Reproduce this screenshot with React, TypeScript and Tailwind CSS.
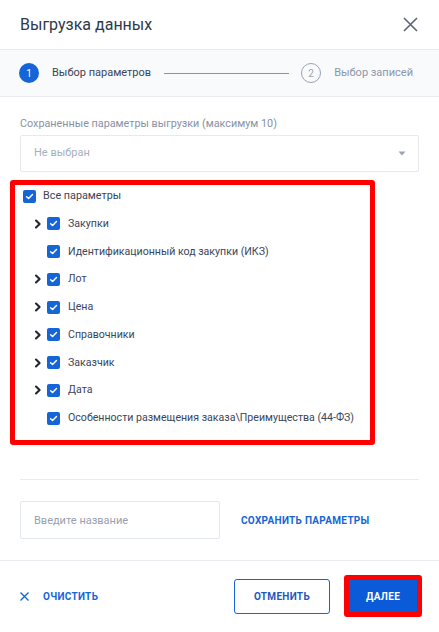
import { useState } from 'react';

type Item = { label: string; expandable: boolean };

const ITEMS: Item[] = [
  { label: 'Закупки', expandable: true },
  { label: 'Идентификационный код закупки (ИКЗ)', expandable: false },
  { label: 'Лот', expandable: true },
  { label: 'Цена', expandable: true },
  { label: 'Справочники', expandable: true },
  { label: 'Заказчик', expandable: true },
  { label: 'Дата', expandable: true },
  { label: 'Особенности размещения заказа\\Преимущества (44-ФЗ)', expandable: false },
];

function Check({ checked }: { checked: boolean }) {
  return (
    <span className={`w-[13px] h-[13px] rounded-[2px] flex items-center justify-center shrink-0 ${checked ? 'bg-[#1565d8]' : 'border border-gray-400 bg-white'}`}>
      {checked && (
        <svg width="9" height="9" viewBox="0 0 10 10" fill="none">
          <path d="M1.8 5.2 L4 7.3 L8.3 2.7" stroke="white" strokeWidth="1.6" strokeLinecap="round" strokeLinejoin="round" />
        </svg>
      )}
    </span>
  );
}

function Chevron() {
  return (
    <svg width="12" height="12" viewBox="0 0 12 12" fill="none">
      <path d="M4 2.5 L7.6 6 L4 9.5" stroke="#1f2733" strokeWidth="2.1" strokeLinecap="round" strokeLinejoin="round" />
    </svg>
  );
}

export default function App() {
  const [name, setName] = useState('');

  return (
    <div className="w-[439px] h-[632px] bg-white flex flex-col text-[#4a5568] whitespace-nowrap" style={{ fontFamily: 'Roboto, "Noto Sans", sans-serif' }}>
      {/* header */}
      <div className="h-[50px] border-b border-[#e6e9ef] flex items-center justify-between px-5">
        <h1 className="text-[16px] text-[#2f3a4b]">Выгрузка данных</h1>
        <button className="w-[16px] h-[16px] flex items-center justify-center mr-[1px]">
          <svg width="15" height="15" viewBox="0 0 15 15">
            <path d="M1 1 L14 14 M14 1 L1 14" stroke="#5b6475" strokeWidth="1.6" />
          </svg>
        </button>
      </div>

      {/* stepper */}
      <div className="h-[47px] bg-[#f9fafc] border-b border-[#e9ecf1] flex items-center pl-[19px] pr-5">
        <span className="w-[20px] h-[20px] rounded-full bg-[#1565d8] text-white text-[10px] flex items-center justify-center">1</span>
        <span className="ml-[13px] text-[11px] text-[#3b4558]">Выбор параметров</span>
        <span className="ml-[13px] w-[125px] h-px bg-[#8a93a6]" />
        <span className="ml-[12px] w-[20px] h-[20px] rounded-full border border-[#9aa3b3] text-[#9aa3b3] text-[10px] flex items-center justify-center">2</span>
        <span className="ml-[13px] text-[11px] text-[#8d96a8]">Выбор записей</span>
      </div>

      {/* body */}
      <div className="flex flex-col">
        <div className="px-5 pt-[19px]">
          <label className="block text-[10.8px] leading-[16px] text-[#8891a3]">Сохраненные параметры выгрузки (максимум 10)</label>
          <div className="mt-[3px] h-[37px] border border-[#e6e9ef] rounded-[2px] flex items-center justify-between pl-[13px] pr-[12px]">
            <span className="text-[11px] text-[#a7afbd]">Не выбран</span>
            <svg width="8" height="5" viewBox="0 0 8 5">
              <path d="M0.5 0.5 L7.5 0.5 L4 4.5 Z" fill="#9aa3b3" />
            </svg>
          </div>
        </div>

        <div className="ml-[10px] mt-[8px] w-[365px] border-[5px] border-[#ff0000] rounded-[3px] pl-[8px] pt-[1px] pb-[12px] flex flex-col gap-[7.75px]">
          <div className="h-[20px] flex items-center gap-[7px]">
            <Check checked />
            <span className="text-[10.8px] text-[#3b4558]">Все параметры</span>
          </div>
          {ITEMS.map((it) => (
            <div key={it.label} className="h-[20px] flex items-center pl-[9px]">
              <span className="w-[15px] flex items-center justify-start">{it.expandable && <Chevron />}</span>
              <Check checked />
              <span className="ml-[8px] text-[10.6px] text-[#3b4558]">{it.label}</span>
            </div>
          ))}
        </div>

        <div className="mx-5 mt-[34px] h-px bg-[#e8ebf0]" />

        <div className="px-5 mt-[21px] flex items-center">
          <input
            value={name}
            onChange={(e) => setName(e.target.value)}
            placeholder="Введите название"
            className="w-[200px] h-[38px] border border-[#e3e7ee] rounded-[2px] px-[13px] text-[11px] outline-none placeholder:text-[#97a0b0]"
          />
          <button className="ml-[21px] text-[10px] font-bold tracking-[0.3px] text-[#1565d8]">СОХРАНИТЬ ПАРАМЕТРЫ</button>
        </div>
      </div>

      {/* footer */}
      <div className="mt-[21px] flex-1 border-t border-[#e8ebf0] flex items-center pl-5 pr-[17px] pb-[1px]">
        <button className="flex items-center">
          <svg width="9" height="9" viewBox="0 0 9 9">
            <path d="M0.5 0.5 L8.5 8.5 M8.5 0.5 L0.5 8.5" stroke="#1565d8" strokeWidth="1.3" />
          </svg>
          <span className="ml-[14px] text-[10px] font-bold tracking-[0.3px] text-[#1565d8]">ОЧИСТИТЬ</span>
        </button>
        <button className="ml-auto w-[96px] h-[35px] border border-[#1565d8] rounded-[3px] text-[10px] font-bold tracking-[0.3px] text-[#1e58b8]">ОТМЕНИТЬ</button>
        <div className="ml-[14px] border-[5px] border-[#ff0000] rounded-[3px]">
          <button className="w-[68px] h-[32px] bg-[#0b5bd8] text-white text-[10px] font-bold tracking-[0.3px]">ДАЛЕЕ</button>
        </div>
      </div>
    </div>
  );
}
